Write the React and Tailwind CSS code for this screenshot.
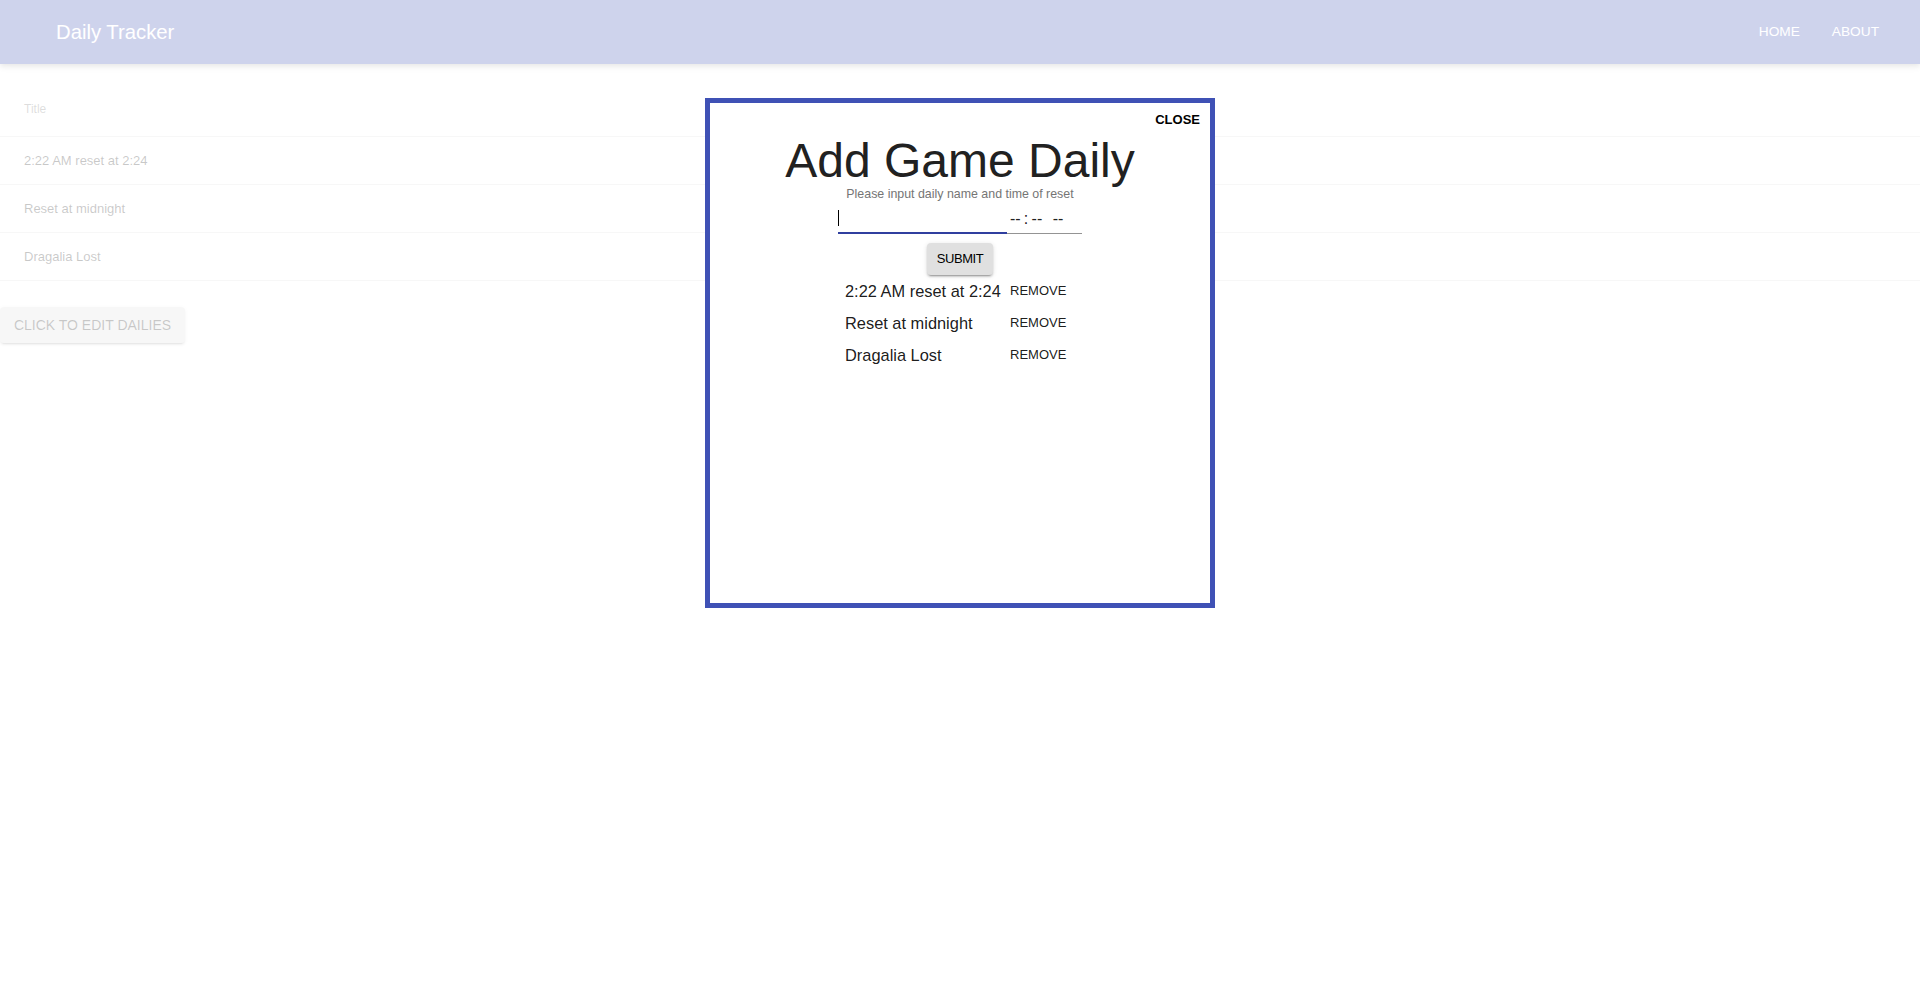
export default function App() {
  const rows = ["2:22 AM reset at 2:24", "Reset at midnight", "Dragalia Lost"];
  return (
    <div className="relative min-h-[982px] bg-white font-['Liberation_Sans',Arial,sans-serif]">
      <header className="flex h-16 items-center justify-between bg-[#3f51b5] pl-[56px] pr-[41px] text-white shadow-[0_2px_4px_-1px_rgba(0,0,0,0.2),0_4px_5px_0_rgba(0,0,0,0.14),0_1px_10px_0_rgba(0,0,0,0.12)]">
        <div className="text-[20.3px] leading-none">Daily Tracker</div>
        <nav className="flex gap-[32px] text-[13.7px] uppercase">
          <span>Home</span>
          <span>About</span>
        </nav>
      </header>

      <div className="mt-[17px]">
        <div className="flex h-[56px] items-center border-b border-[#e0e0e0] pl-6 text-[12px] text-black/55">
          Title
        </div>
        {rows.map((r) => (
          <div key={r} className="flex h-[48px] items-center border-b border-[#e0e0e0] pl-6 text-[13px] text-black/85">
            {r}
          </div>
        ))}
      </div>

      <button className="mt-[26px] flex h-9 w-[185px] items-center justify-center rounded bg-[#e0e0e0] text-[14px] uppercase text-black/85 shadow-[0_3px_1px_-2px_rgba(0,0,0,0.2),0_2px_2px_0_rgba(0,0,0,0.14),0_1px_5px_0_rgba(0,0,0,0.12)]">
        Click to edit dailies
      </button>

      <div className="fixed inset-0 bg-white/75" />

      <div className="fixed inset-0 flex items-start justify-center pt-[98px]">
        <div className="flex h-[510px] w-[510px] flex-col items-center border-[5px] border-[#3f51b5] bg-white">
          <div className="flex h-[30px] self-stretch justify-end pr-[10px] pt-[9px]">
            <span className="text-[13px] font-bold leading-[15px] text-black">CLOSE</span>
          </div>
          <h2 className="h-[55px] text-[48px] font-normal leading-[55px] text-[#212121]">Add Game Daily</h2>
          <p className="h-[14px] -translate-y-px text-[12.4px] leading-[14px] text-[#757575]">Please input daily name and time of reset</p>
          <div className="flex h-[32px] w-[244px] items-end">
            <div className="h-full w-[169px] border-b-2 border-[#303f9f] pt-[8px]">
              <div className="h-[16px] w-px bg-black" />
            </div>
            <div className="flex h-full flex-1 border-b border-[#949494] pl-[3px] pt-[7px] text-[16px] leading-[19px] text-[#222]">
              <span>--</span>
              <span className="ml-[3px]">:</span>
              <span className="ml-[3.5px]">--</span>
              <span className="ml-[10.5px]">--</span>
            </div>
          </div>
          <button className="mt-[9px] flex h-[32px] w-[66px] items-center justify-center rounded bg-[#e0e0e0] text-[13px] tracking-[-0.4px] text-black shadow-[0_3px_1px_-2px_rgba(0,0,0,0.2),0_2px_2px_0_rgba(0,0,0,0.14),0_1px_5px_0_rgba(0,0,0,0.12)]">
            SUBMIT
          </button>
          <div className="flex w-[230px] flex-col">
            {rows.map((r) => (
              <div key={r} className="flex h-[32px] items-center">
                <span className="w-[160px] text-[16.4px] text-black/90">{r}</span>
                <span className="px-[5px] text-[13px] text-black/90">REMOVE</span>
              </div>
            ))}
          </div>
        </div>
      </div>
    </div>
  );
}
